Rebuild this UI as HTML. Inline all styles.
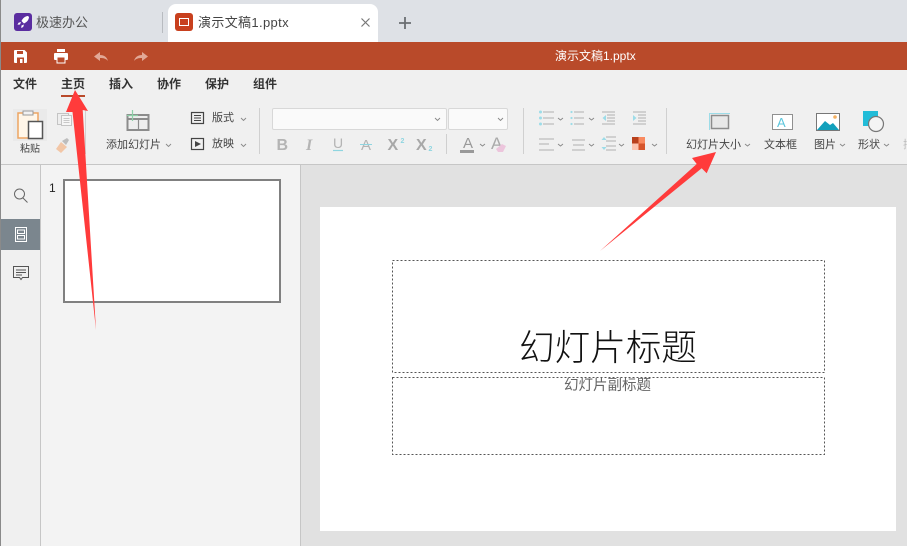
<!DOCTYPE html>
<html><head><meta charset="utf-8">
<style>
html,body{margin:0;padding:0;width:907px;height:546px;overflow:hidden;background:#f0f0f0}
body{position:relative;font-family:"Liberation Sans","Noto Sans CJK SC",sans-serif}
div,span.t{position:absolute}
.t{position:absolute;white-space:nowrap;line-height:16px;color:#444}
.m{font-size:12px;font-weight:700;color:#333;top:76px}
.r{font-size:11px;color:#444}
svg{position:absolute;left:0;top:0}
</style></head><body>
<div style="left:0;top:0;width:907px;height:42px;background:#dee1e6"></div>
<div style="left:168px;top:4px;width:210px;height:38px;background:#fff;border-radius:8px 8px 0 0"></div>
<div style="left:162px;top:12px;width:1px;height:21px;background:#b8bbc0"></div>
<span class="t" style="left:36px;top:15px;font-size:13px;color:#555">极速办公</span>
<span class="t" style="left:198px;top:15px;font-size:13px;color:#444;letter-spacing:.35px">演示文稿1.pptx</span>
<div style="left:0;top:42px;width:907px;height:28px;background:#b94a2a"></div>
<span class="t" style="left:555px;top:48px;font-size:12px;color:#fff">演示文稿1.pptx</span>
<div style="left:0;top:70px;width:907px;height:94px;background:#f0f0f0"></div>
<span class="t m" style="left:13px">文件</span>
<span class="t m" style="left:61px">主页</span>
<span class="t m" style="left:109px">插入</span>
<span class="t m" style="left:157px">协作</span>
<span class="t m" style="left:205px">保护</span>
<span class="t m" style="left:253px">组件</span>
<div style="left:61px;top:95px;width:24px;height:2px;background:#b94a2a"></div>
<div style="left:0;top:164px;width:907px;height:1px;background:#c6c6c6"></div>
<div style="left:1px;top:165px;width:39px;height:381px;background:#f0f0f0"></div>
<div style="left:40px;top:165px;width:1px;height:381px;background:#c6c6c6"></div>
<div style="left:41px;top:165px;width:259px;height:381px;background:#f3f3f3"></div>
<div style="left:300px;top:165px;width:1px;height:381px;background:#c6c6c6"></div>
<div style="left:301px;top:165px;width:606px;height:381px;background:#e1e1e1"></div>
<div style="left:0;top:0;width:1px;height:546px;background:#8a8a8a"></div>
<div style="left:1px;top:219px;width:39px;height:31px;background:#7b868e"></div>
<span class="t" style="left:49px;top:180px;font-size:12px;color:#222">1</span>
<div style="left:63px;top:179px;width:214px;height:120px;background:#fff;border:2px solid #808080"></div>
<div style="left:320px;top:207px;width:576px;height:324px;background:#fff"></div>
<span class="t" style="left:519px;top:325px;font-size:35.6px;line-height:46px;color:#111;font-weight:300">幻灯片标题</span>
<span class="t" style="left:564px;top:378px;font-size:14.5px;line-height:17px;color:#666">幻灯片副标题</span>

<span class="t r" style="left:20px;top:142px;font-size:10px">粘贴</span>
<span class="t r" style="left:106px;top:137px">添加幻灯片</span>
<span class="t r" style="left:212px;top:110px">版式</span>
<span class="t r" style="left:212px;top:136px">放映</span>
<span class="t r" style="left:686px;top:137px">幻灯片大小</span>
<span class="t r" style="left:764px;top:137px">文本框</span>
<span class="t r" style="left:814px;top:137px">图片</span>
<span class="t r" style="left:858px;top:137px">形状</span>
<span class="t r" style="left:903px;top:137px;color:#bbb">插</span>

<div style="left:272px;top:108px;width:173px;height:20px;background:#fafafa;border:1px solid #d8d8d8;border-radius:2px"></div>
<div style="left:448px;top:108px;width:58px;height:20px;background:#fafafa;border:1px solid #d8d8d8;border-radius:2px"></div>

<svg width="907" height="546" viewBox="0 0 907 546">
<!-- placeholder boxes -->
<rect x="392.500" y="260.500" width="432" height="112" fill="none" stroke="#555" stroke-width="1" stroke-dasharray="2 2"/>
<rect x="392.500" y="377.500" width="432" height="77" fill="none" stroke="#555" stroke-width="1" stroke-dasharray="2 2"/>
<!-- tab icons -->
<rect x="14" y="13" width="18" height="18" rx="3" fill="#5a2da0"/>
<path d="M28 16c-3 .3-5 2-6.500 5l2.500 2.500c3-1.500 4.700-3.500 5-6.500z M21 22l-2.500.8-1 2 2.500-.3z M24 24.500l-.8 2.500-2 1 .3-2.500z M19 26l-1.500 1.500" fill="#fff"/>
<rect x="175" y="13" width="18" height="18" rx="3" fill="#c8401e"/>
<rect x="179.500" y="18.500" width="9" height="7" fill="none" stroke="#fff" stroke-width="1"/>
<path d="M361.500 18.500l8 8M369.500 18.500l-8 8" stroke="#777" stroke-width="1.200"/>
<path d="M405 17v12M399 23h12" stroke="#6a6e72" stroke-width="1.800"/>
<!-- title bar icons -->
<path d="M15 50h9.500l2.500 2.500V62a1 1 0 0 1-1 1H15a1 1 0 0 1-1-1V51a1 1 0 0 1 1-1z" fill="#fff"/>
<rect x="17" y="51" width="6" height="3" fill="#b94a2a"/><rect x="17" y="57.500" width="7" height="5.500" fill="#b94a2a"/><rect x="20" y="59" width="2.500" height="4" fill="#fff"/>
<rect x="57" y="49" width="8" height="3" fill="#fff"/><rect x="54" y="53" width="14" height="7" rx="1" fill="#fff"/><rect x="57" y="57" width="8" height="6" fill="#b94a2a" stroke="#fff" stroke-width="1"/>
<path d="M94 56.500l6-4.500v3c4 0 7 2 8 6-2-2.500-4.500-3-8-3v3z" fill="#e2a896"/>
<path d="M148 56.500l-6-4.500v3c-4 0-7 2-8 6 2-2.500 4.500-3 8-3v3z" fill="#e2a896"/>
<!-- paste -->
<rect x="13" y="109" width="34" height="32" fill="#eaeaea"/>
<rect x="18" y="113" width="20" height="25" fill="#fff6e8" stroke="#eda563" stroke-width="1.500"/>
<rect x="23" y="111" width="10" height="4" fill="#f2f2f2" stroke="#999" stroke-width="1"/>
<rect x="28.500" y="121.500" width="14" height="17" fill="#fff" stroke="#555" stroke-width="1.500"/>
<!-- copy -->
<rect x="57.500" y="113.500" width="11" height="11" fill="#eee" stroke="#c4c4c4"/>
<rect x="61.500" y="115.500" width="10" height="10" fill="#f6f6f6" stroke="#c4c4c4"/>
<path d="M63.500 118.500h6M63.500 120.500h6M63.500 122.500h6" stroke="#c8c8c8"/>
<!-- brush -->
<path d="M56 149l5-7 6 5-6 6z" fill="#f2c6a6"/><path d="M62 141l5-3 2 2-3 5z" fill="#bdbdbd"/>
<!-- ribbon seps -->
<path d="M85.500 110v44M259.500 108v46M523.500 108v46M666.500 108v46" stroke="#d0d0d0" stroke-width="1"/>
<path d="M446.500 134v20" stroke="#cfcfcf"/>
<!-- add slide -->
<path d="M127.500 115h21v15h-21z" fill="#eee" stroke="#8c8c8c" stroke-width="2"/>
<path d="M128 118h20v2h-20z" fill="#8c8c8c"/><path d="M138.500 120v9" stroke="#8c8c8c" stroke-width="1.200"/>
<path d="M132.500 110v11M127 115.500h11" stroke="#8ed0a8" stroke-width="1.200"/>
<!-- layout / play -->
<rect x="191.500" y="112.500" width="12" height="11" fill="none" stroke="#444" stroke-width="1.200"/>
<path d="M194 115.500h7M194 118h7M194 120.500h7" stroke="#444"/>
<rect x="191.500" y="138.500" width="12" height="11" fill="none" stroke="#444" stroke-width="1.200"/>
<path d="M195 141l6 3-6 3z" fill="#444"/>
<!-- chevrons -->
<g fill="none" stroke="#888" stroke-width="0.900">
<path d="M166 144l2.500 2.500 2.500-2.500M241 118l2.500 2.500 2.500-2.500M241 144l2.500 2.500 2.500-2.500M435 118l2.500 2.500 2.500-2.500M498 118l2.500 2.500 2.500-2.500"/>
<path d="M480 144l2.500 2 2.500-2M558 118l2.500 2 2.500-2M589 118l2.500 2 2.500-2M558 144l2.500 2 2.500-2M589 144l2.500 2 2.500-2M619 144l2.500 2 2.500-2M652 144l2.500 2 2.500-2M745 144l2.500 2 2.500-2M840 144l2.500 2 2.500-2M884 144l2.500 2 2.500-2"/>
</g>
<!-- font buttons -->
<g fill="#b4b4b4" font-family="Liberation Sans" font-size="15">
<text x="276.500" y="150" font-weight="700" font-size="16">B</text>
<text x="306" y="150" font-style="italic" font-family="Liberation Serif" font-weight="700" font-size="16">I</text>
<text x="333" y="148" font-size="14">U</text>
<text x="361" y="150" font-size="15">A</text>
<text x="387.500" y="150" font-size="16" font-weight="700" fill="#a8a8a8">X</text>
<text x="416" y="150" font-size="16" font-weight="700" fill="#a8a8a8">X</text>
<text x="463" y="148" font-size="15" fill="#999">A</text>
<text x="491" y="149" font-size="17" fill="#aaa">A</text>
<text x="400.500" y="143" font-size="7" fill="#8fd5e0" font-weight="700">2</text>
<text x="428.500" y="151" font-size="7" fill="#8fd5e0" font-weight="700">2</text>
</g>
<path d="M333 150.500h10" stroke="#8fd5e0" stroke-width="1.200"/>
<path d="M360 144.500h12" stroke="#8fd5e0"/>
<rect x="460" y="150" width="14" height="3" fill="#999"/>
<path d="M496 149l6-5 4 2-3 6h-5z" fill="#ecc5dc"/>
<!-- lists -->
<g stroke="#bdbdbd" stroke-width="1.300">
<path d="M543 112h11M543 118h11M543 124h11"/>
<path d="M574 112h10M574 118h10M574 124h10"/>
<path d="M602 112h13M607 115h8M607 118h8M607 121h8M602 124h13"/>
<path d="M633 112h13M638 115h8M638 118h8M638 121h8M633 124h13"/>
<path d="M539 139h15M539 144h10M539 150h15"/>
<path d="M572 140h13M573 145h11M572 150h13"/>
<path d="M606 137h10M606 141h10M606 146h10M606 150h10"/>
</g>
<g fill="#9cdce8">
<circle cx="540.500" cy="112" r="1.500"/><circle cx="540.500" cy="118" r="1.500"/><circle cx="540.500" cy="124" r="1.500"/>
<circle cx="571.500" cy="112" r="1.100"/><circle cx="571.500" cy="118" r="1.100"/><circle cx="571.500" cy="124" r="1.100"/>
<path d="M606 115v6l-3.500-3zM633 115v6l3.500-3zM604 137l-2.500 3h5zM604 150l-2.500-3h5z"/>
</g>
<rect x="632" y="137" width="6.500" height="6.500" fill="#b8401c"/><rect x="638.500" y="137" width="6.500" height="6.500" fill="#f98a60"/>
<rect x="632" y="143.500" width="6.500" height="6.500" fill="#fcc4b0"/><rect x="638.500" y="143.500" width="6.500" height="6.500" fill="#d6552c"/>
<!-- slide size -->
<rect x="711.500" y="115.500" width="17" height="13" fill="#e8e8e8" stroke="#8c8c8c" stroke-width="1.500"/>
<path d="M709 113.500h21M709.500 113v17" stroke="#9cdce8" stroke-width="1"/>
<!-- text box -->
<rect x="772.500" y="114.500" width="20" height="15" fill="#fff" stroke="#909090" stroke-width="1"/>
<text x="777" y="127" font-size="13" fill="#5cc6dc" font-family="Liberation Sans">A</text>
<!-- picture -->
<rect x="816.500" y="113.500" width="23" height="17" fill="#fff" stroke="#777" stroke-width="1"/>
<path d="M817 130l8-9 5 4 3-2 6 7z" fill="#12a0bc"/><circle cx="835" cy="117" r="1.800" fill="#f4b060"/>
<!-- shape -->
<rect x="863" y="111" width="15" height="15" fill="#22bcd8"/>
<circle cx="876" cy="124" r="7.500" fill="#f4f4f4" stroke="#777" stroke-width="1.200"/>
<!-- sidebar -->
<circle cx="19.500" cy="194" r="5" fill="none" stroke="#666" stroke-width="1"/>
<path d="M23 198l4.500 4.500" stroke="#666" stroke-width="1"/>
<rect x="15.500" y="227.500" width="11" height="14" fill="none" stroke="#fff" stroke-width="1"/>
<rect x="17.500" y="230" width="7" height="3.500" fill="none" stroke="#fff" stroke-width="1"/><rect x="17.500" y="235.500" width="7" height="3.500" fill="none" stroke="#fff" stroke-width="1"/>
<path d="M13.500 266.500h15v11h-6l-1.500 2-1.500-2h-6z" fill="none" stroke="#555" stroke-width="1"/>
<path d="M16 270h10M16 272.500h10M16 275h6" stroke="#555"/>
<!-- arrows -->
<path d="M75 90L88 111 82.700 110 96 330 72.500 112 66 112z" fill="#ff3b3b"/>
<path d="M716 152L692 158 696.700 164 600 251 701.700 168.300 706.700 173.300z" fill="#ff3b3b"/>
</svg>
</body></html>
